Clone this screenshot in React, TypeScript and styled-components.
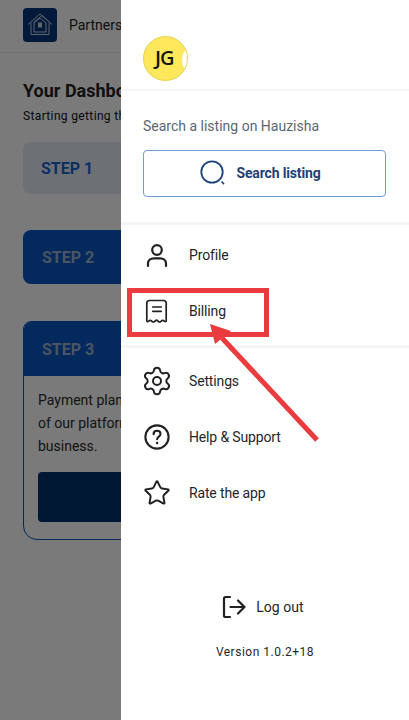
import React from "react";
import styled, { createGlobalStyle } from "styled-components";
import { Settings, Star } from "lucide-react";

const Global = createGlobalStyle`
  html, body { margin: 0; padding: 0; background: #fff; }
  * { box-sizing: border-box; }
  body { font-family: Roboto, "Liberation Sans", sans-serif; }
`;

const Screen = styled.div`
  position: relative;
  width: 409px;
  height: 720px;
  overflow: hidden;
  background: #fff;
`;

/* ---------- page behind the drawer ---------- */
const Page = styled.main`
  width: 409px;
  height: 720px;
  display: flex;
  flex-direction: column;
  background: #fff;
`;
const TopBar = styled.header`
  height: 53px;
  padding: 8px 23px 0;
  display: flex;
  align-items: flex-start;
  gap: 12px;
  border-bottom: 1px solid #f0f0f0;
`;
const LogoBox = styled.div`
  width: 34px;
  height: 34px;
  border-radius: 4px;
  background: #03357a;
  display: flex;
  align-items: center;
  justify-content: center;
`;
const BrandName = styled.span`
  font-size: 14px;
  line-height: 34px;
  color: #1d1d1d;
  white-space: nowrap;
`;
const Content = styled.div`
  padding: 27px 23px 0;
  display: flex;
  flex-direction: column;
  width: 363px;
`;
const Title = styled.h1`
  margin: 0;
  font-size: 18px;
  line-height: 22px;
  font-weight: 700;
  color: #222;
  white-space: nowrap;
`;
const Subtitle = styled.p`
  margin: 5px 0 0;
  font-size: 12px;
  line-height: 18px;
  letter-spacing: 0.35px;
  color: #111;
  white-space: nowrap;
`;
const StepCard = styled.div<{ $tone: "light" | "solid"; $gap: number }>`
  margin-top: ${(p) => p.$gap}px;
  height: ${(p) => (p.$tone === "light" ? 52 : 54)}px;
  padding-left: ${(p) => (p.$tone === "light" ? 18 : 19)}px;
  display: flex;
  align-items: center;
  border-radius: 8px;
  background: ${(p) => (p.$tone === "light" ? "#e3ebf5" : "#0a57c2")};
  color: ${(p) => (p.$tone === "light" ? "#1f62cc" : "#9cb0d0")};
  font-size: 16px;
  font-weight: 700;
`;
const StepPanel = styled.section`
  margin-top: 37px;
  height: 219px;
  border: 1px solid #0a57c2;
  border-radius: 8px 8px 14px 14px;
  overflow: hidden;
`;
const StepHead = styled.div`
  height: 54px;
  padding-left: 18px;
  display: flex;
  align-items: center;
  background: #0a57c2;
  color: #9cb0d0;
  font-size: 16px;
  font-weight: 700;
`;
const StepBody = styled.div`
  padding: 13px 14px 0;
  font-size: 14px;
  line-height: 23px;
  color: #2a2a2a;
`;
const PlanLine = styled.div`
  white-space: nowrap;
`;
const PayButton = styled.div`
  margin-top: 14px;
  height: 50px;
  border-radius: 4px;
  background: #03326e;
`;

const Scrim = styled.div`
  position: absolute;
  inset: 0;
  background: rgba(0, 0, 0, 0.52);
`;

/* ---------- drawer ---------- */
const Drawer = styled.aside`
  position: absolute;
  top: 0;
  right: 0;
  bottom: 0;
  width: 288px;
  background: #fff;
  display: flex;
  flex-direction: column;
`;
const ProfileHead = styled.div`
  height: 91px;
  padding: 36px 22px 0;
  border-bottom: 2px solid #f5f5f5;
`;
const Avatar = styled.div`
  position: relative;
  width: 45px;
  height: 45px;
  border-radius: 50%;
  background: #fce85a;
  border: 1px solid #e6d24e;
  overflow: hidden;
  display: flex;
  align-items: center;
  padding: 0 0 3px 11px;
  font-family: "Open Sans", sans-serif;
  font-size: 20px;
  font-weight: 600;
  letter-spacing: -1px;
  color: #161616;
  &::after {
    content: "";
    position: absolute;
    right: -11px;
    top: 11px;
    width: 16px;
    height: 24px;
    border-radius: 50%;
    background: #fff;
  }
`;
const SearchBlock = styled.div`
  height: 134px;
  padding: 26px 22px 0;
  border-bottom: 3px solid #f5f5f5;
`;
const SearchLabel = styled.div`
  font-size: 14px;
  line-height: 18px;
  color: #5d6670;
`;
const SearchButton = styled.button`
  margin-top: 15px;
  width: 243px;
  height: 47px;
  border: 1px solid #6f9dd8;
  border-radius: 4px;
  background: #fff;
  display: flex;
  align-items: center;
  justify-content: center;
  gap: 10px;
  font-family: inherit;
  font-size: 14px;
  font-weight: 700;
  letter-spacing: -0.15px;
  color: #1d4278;
  padding: 0 8px 2px 0;
`;
const MenuGroup = styled.nav<{ $top: number; $bottom?: number; $border?: boolean }>`
  padding-top: ${(p) => p.$top}px;
  padding-bottom: ${(p) => p.$bottom ?? 0}px;
  display: flex;
  flex-direction: column;
  ${(p) => (p.$border ? "border-bottom: 3px solid #f5f5f5;" : "")}
`;
const MenuRow = styled.div`
  height: 56px;
  padding-left: 22px;
  display: flex;
  align-items: center;
  gap: 18px;
  font-size: 14px;
  letter-spacing: -0.15px;
  color: #23272b;
`;
const IconSlot = styled.span`
  width: 28px;
  height: 28px;
  display: flex;
  align-items: center;
  justify-content: center;
  color: #1f2124;
`;
const Footer = styled.div`
  margin-top: auto;
  padding-bottom: 60px;
  display: flex;
  flex-direction: column;
  align-items: center;
`;
const LogoutRow = styled.div`
  display: flex;
  align-items: center;
  gap: 10px;
  height: 28px;
  font-size: 14px;
  font-weight: 400;
  letter-spacing: 0.05px;
  color: #23272b;
  margin-right: 4px;
`;
const Version = styled.div`
  margin-top: 23px;
  font-size: 12px;
  line-height: 16px;
  letter-spacing: 0.5px;
  color: #23272b;
`;

/* ---------- red annotation over the screenshot ---------- */
const Annotation = styled.svg`
  position: absolute;
  inset: 0;
  width: 409px;
  height: 720px;
  pointer-events: none;
`;

const Stroke = { fill: "none", stroke: "#1f2124", strokeLinecap: "round" as const, strokeLinejoin: "round" as const };

const PersonIcon = () => (
  <svg width="28" height="28" viewBox="0 0 28 28">
    <circle cx="14" cy="9" r="4.800" {...Stroke} strokeWidth={2.200} />
    <path d="M5 25v-2.500c0-3.400 2.700-5.200 5.800-5.200h6.400c3.100 0 5.800 1.800 5.800 5.200V25" {...Stroke} strokeWidth={2.200} />
  </svg>
);
const ReceiptIcon = () => (
  <svg width="28" height="28" viewBox="0 0 28 28">
    <path d="M7.500 3.500h13c1.800 0 2.700 1.100 2.700 2.800v17.400c0 .9-.8 1.200-1.500.7-1.200-1-2-1.700-3.100-.5-1.400 1.600-2.500 1.600-3.900 0-.9-1-1.500-1-2.400 0-1.400 1.600-2.500 1.600-3.900 0-1.100-1.200-1.900-.5-3.100.5-.7.5-1.500.2-1.500-.7V6.300c0-1.700.9-2.800 2.700-2.800z" {...Stroke} strokeWidth={1.700} />
    <path d="M9.800 10h8.400M9.800 14.300h8.400" {...Stroke} strokeWidth={1.700} />
  </svg>
);
const HelpIcon = () => (
  <svg width="28" height="28" viewBox="0 0 28 28">
    <circle cx="14" cy="14" r="11.600" {...Stroke} strokeWidth={2.100} />
    <path d="M10.600 11.200c0-2 1.500-3.400 3.500-3.400s3.400 1.300 3.400 3.100c0 2.600-3.400 2.800-3.400 5.400" {...Stroke} strokeWidth={2.100} />
    <circle cx="14.100" cy="20" r="1.200" fill="#1f2124" />
  </svg>
);
const SearchGlyph = () => (
  <svg width="26" height="26" viewBox="0 0 26 26">
    <circle cx="12" cy="12" r="10.700" fill="none" stroke="#1d4278" strokeWidth="1.800" />
    <path d="M21.500 21.500l2.500 2.600" fill="none" stroke="#1d4278" strokeWidth="1.600" />
  </svg>
);
const LogoutGlyph = () => (
  <svg width="24" height="24" viewBox="0 0 24 24">
    <path d="M8 2H3.500C2.500 2 2 2.600 2 3.500v17c0 .9.500 1.500 1.500 1.500H8" {...Stroke} strokeWidth={2.200} />
    <path d="M8.500 12h14M16 5.500l6.500 6.500-6.500 6.500" {...Stroke} strokeWidth={2.200} />
  </svg>
);
const HouseLogo = () => (
  <svg width="28" height="28" viewBox="0 0 28 28" fill="none" stroke="#c9d3e4" strokeWidth="1" strokeLinejoin="round">
    <path d="M2 13.500L14 3l12 10.500" />
    <path d="M5 12v11.500h18V12" />
    <path d="M7.500 11.500L16 4.500l8 7" />
    <path d="M8 21V12l6-5 6 5v9z" />
    <rect x="12" y="11.500" width="4" height="5" fill="#c9d3e4" stroke="none" />
  </svg>
);

const menuTop = [
  { label: "Profile", icon: <PersonIcon /> },
  { label: "Billing", icon: <ReceiptIcon /> },
];
const menuBottom = [
  { label: "Settings", icon: <Settings size={32} strokeWidth={1.500} style={{ flexShrink: 0 }} /> },
  { label: "Help & Support", icon: <HelpIcon /> },
  { label: "Rate the app", icon: <Star size={28} strokeWidth={1.700} /> },
];

export default function App() {
  return (
    <Screen>
      <Global />
      <Page>
        <TopBar>
          <LogoBox>
            <HouseLogo />
          </LogoBox>
          <BrandName>Partners</BrandName>
        </TopBar>
        <Content>
          <Title>Your Dashboard</Title>
          <Subtitle>Starting getting the most</Subtitle>
          <StepCard $tone="light" $gap={17}>STEP 1</StepCard>
          <StepCard $tone="solid" $gap={36}>STEP 2</StepCard>
          <StepPanel>
            <StepHead>STEP 3</StepHead>
            <StepBody>
              <PlanLine>Payment plans give you access to all</PlanLine>
              <PlanLine>of our platform features for your</PlanLine>
              <PlanLine>business.</PlanLine>
              <PayButton />
            </StepBody>
          </StepPanel>
        </Content>
      </Page>
      <Scrim />
      <Drawer>
        <ProfileHead>
          <Avatar>JG</Avatar>
        </ProfileHead>
        <SearchBlock>
          <SearchLabel>Search a listing on Hauzisha</SearchLabel>
          <SearchButton>
            <SearchGlyph />
            Search listing
          </SearchButton>
        </SearchBlock>
        <MenuGroup $top={2} $bottom={6} $border>
          {menuTop.map((m) => (
            <MenuRow key={m.label}>
              <IconSlot>{m.icon}</IconSlot>
              {m.label}
            </MenuRow>
          ))}
        </MenuGroup>
        <MenuGroup $top={5}>
          {menuBottom.map((m) => (
            <MenuRow key={m.label}>
              <IconSlot>{m.icon}</IconSlot>
              {m.label}
            </MenuRow>
          ))}
        </MenuGroup>
        <Footer>
          <LogoutRow>
            <LogoutGlyph />
            Log out
          </LogoutRow>
          <Version>Version 1.0.2+18</Version>
        </Footer>
      </Drawer>
      <Annotation viewBox="0 0 409 720">
        <rect x="129.500" y="290.500" width="137" height="44" fill="none" stroke="#ea3b3f" strokeWidth="5" />
        <path d="M317 440L222 338" fill="none" stroke="#ea3b3f" strokeWidth="5" />
        <path d="M210 324l21 7-16 13z" fill="#ea3b3f" />
      </Annotation>
    </Screen>
  );
}
